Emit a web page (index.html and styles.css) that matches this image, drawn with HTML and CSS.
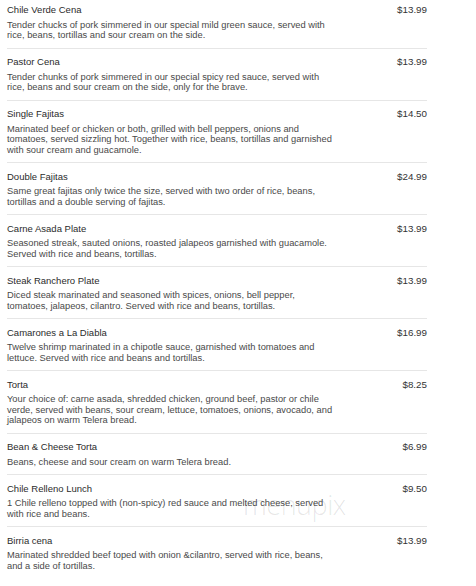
FILE: index.html
```html
<!DOCTYPE html>
<html>
<head>
<meta charset="utf-8">
<link rel="stylesheet" href="styles.css">
</head>
<body>
<div class="menu">
  <div class="item">
    <div class="info">
      <div class="name">Chile Verde Cena</div>
      <div class="desc">Tender chucks of pork simmered in our special mild green sauce, served with rice, beans, tortillas and sour cream on the side.</div>
    </div>
    <div class="price">$13.99</div>
  </div>
  <div class="item">
    <div class="info">
      <div class="name">Pastor Cena</div>
      <div class="desc">Tender chunks of pork simmered in our special spicy red sauce, served with rice, beans and sour cream on the side, only for the brave.</div>
    </div>
    <div class="price">$13.99</div>
  </div>
  <div class="item">
    <div class="info">
      <div class="name">Single Fajitas</div>
      <div class="desc">Marinated beef or chicken or both, grilled with bell peppers, onions and tomatoes, served sizzling hot. Together with rice, beans, tortillas and garnished with sour cream and guacamole.</div>
    </div>
    <div class="price">$14.50</div>
  </div>
  <div class="item">
    <div class="info">
      <div class="name">Double Fajitas</div>
      <div class="desc">Same great fajitas only twice the size, served with two order of rice, beans, tortillas and a double serving of fajitas.</div>
    </div>
    <div class="price">$24.99</div>
  </div>
  <div class="item">
    <div class="info">
      <div class="name">Carne Asada Plate</div>
      <div class="desc">Seasoned streak, sauted onions, roasted jalapeos garnished with guacamole. Served with rice and beans, tortillas.</div>
    </div>
    <div class="price">$13.99</div>
  </div>
  <div class="item">
    <div class="info">
      <div class="name">Steak Ranchero Plate</div>
      <div class="desc">Diced steak marinated and seasoned with spices, onions, bell pepper, tomatoes, jalapeos, cilantro. Served with rice and beans, tortillas.</div>
    </div>
    <div class="price">$13.99</div>
  </div>
  <div class="item">
    <div class="info">
      <div class="name">Camarones a La Diabla</div>
      <div class="desc">Twelve shrimp marinated in a chipotle sauce, garnished with tomatoes and lettuce. Served with rice and beans and tortillas.</div>
    </div>
    <div class="price">$16.99</div>
  </div>
  <div class="item">
    <div class="info">
      <div class="name">Torta</div>
      <div class="desc">Your choice of: carne asada, shredded chicken, ground beef, pastor or chile verde, served with beans, sour cream, lettuce, tomatoes, onions, avocado, and jalapeos on warm Telera bread.</div>
    </div>
    <div class="price">$8.25</div>
  </div>
  <div class="item">
    <div class="info">
      <div class="name">Bean &amp; Cheese Torta</div>
      <div class="desc">Beans, cheese and sour cream on warm Telera bread.</div>
    </div>
    <div class="price">$6.99</div>
  </div>
  <div class="item">
    <div class="info">
      <div class="name">Chile Relleno Lunch</div>
      <div class="desc">1 Chile relleno topped with (non-spicy) red sauce and melted cheese, served with rice and beans.</div>
    </div>
    <div class="price">$9.50</div>
  </div>
  <div class="item">
    <div class="info">
      <div class="name">Birria cena</div>
      <div class="desc">Marinated shredded beef toped with onion &amp;cilantro, served with rice, beans, and a side of tortillas.</div>
    </div>
    <div class="price">$13.99</div>
  </div>
</div>
<div class="watermark">menupix</div>
</body>
</html>
```
FILE: styles.css
```css
html, body {
  margin: 0;
  padding: 0;
  background: #ffffff;
}
body {
  font-family: "Liberation Sans", Arial, sans-serif;
  position: relative;
  width: 476px;
  height: 586px;
  overflow: hidden;
}
.menu {
  width: 420px;
  margin-left: 7px;
}
.item {
  display: flex;
  justify-content: space-between;
  align-items: flex-start;
  padding: 7.5px 0 6.85px;
  border-bottom: 1px solid #e6e6e6;
}
.item:first-child {
  padding-top: 4.4px;
}
.item:last-child {
  border-bottom: none;
}
.info {
  width: 331px;
}
.name {
  font-size: 9.5px;
  line-height: 12.2px;
  color: #2b2b2b;
}
.desc {
  margin-top: 3px;
  font-size: 9.32px;
  line-height: 10.7px;
  color: #4a4a4a;
}
.price {
  font-size: 9.8px;
  line-height: 12px;
  color: #333333;
}
.watermark {
  position: absolute;
  left: 243px;
  top: 491px;
  font-family: "Open Sans", sans-serif;
  font-weight: 300;
  font-size: 27px;
  line-height: 27px;
  color: rgba(0, 0, 0, 0.1);
  letter-spacing: -0.5px;
  pointer-events: none;
}
```
